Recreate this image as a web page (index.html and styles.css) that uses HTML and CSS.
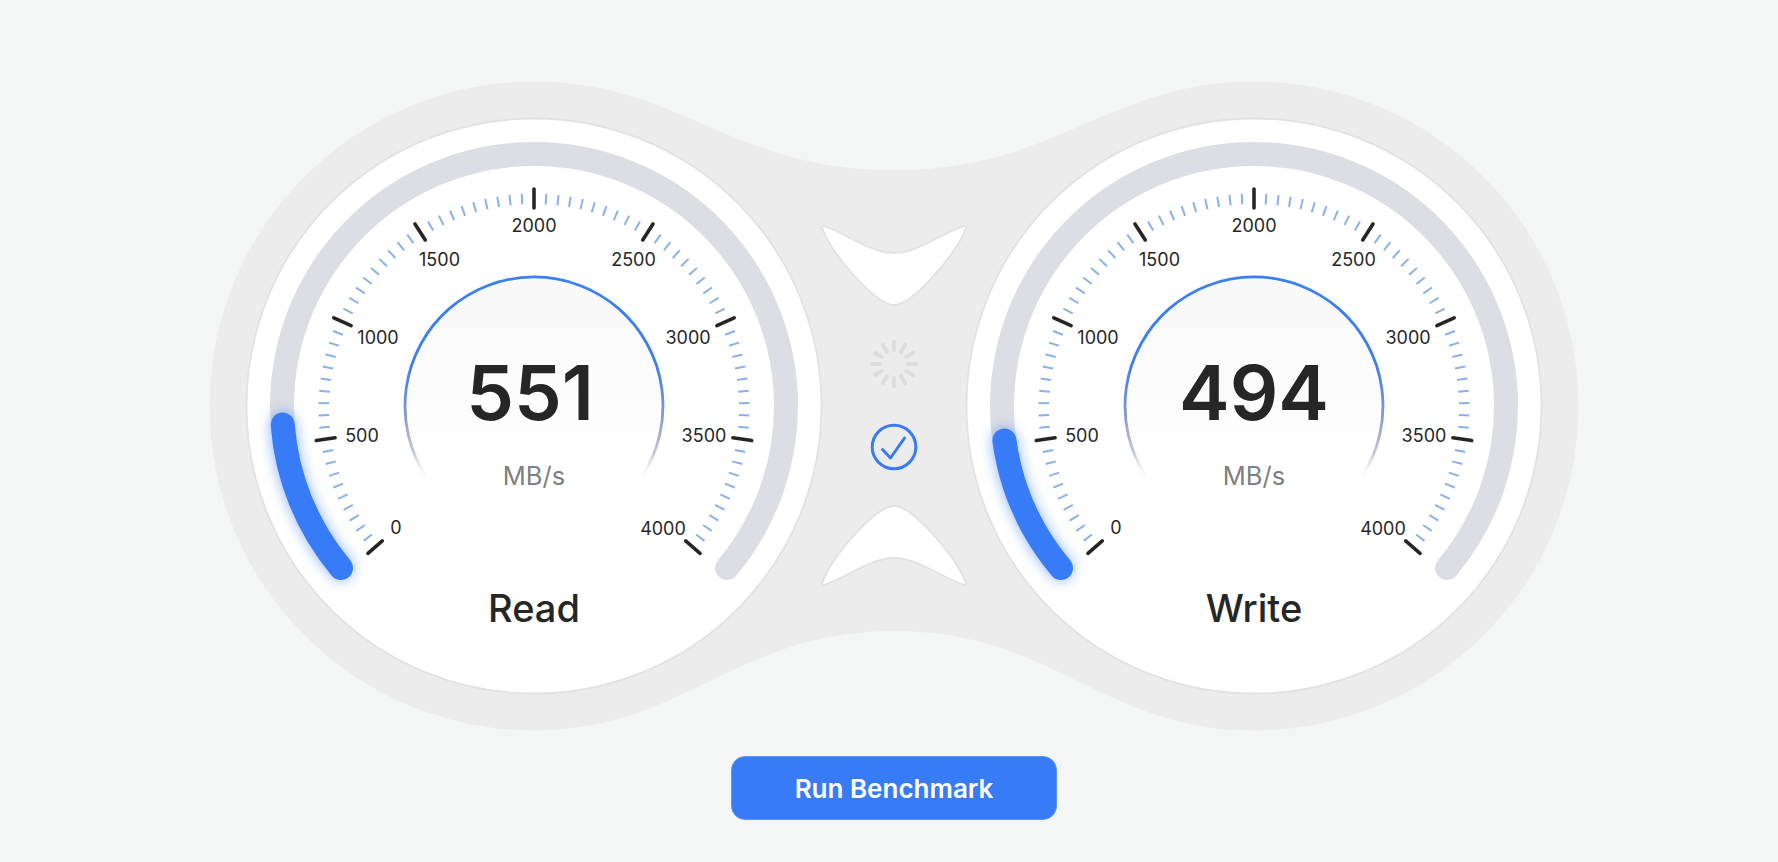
FILE: index.html
```html
<!DOCTYPE html>
<html lang="en">
<head>
<meta charset="utf-8">
<title>Disk Benchmark</title>
<link rel="stylesheet" href="styles.css">
</head>
<body>
<main class="page">
  <svg class="panel" viewBox="0 0 1778 756" width="1778" height="756" xmlns="http://www.w3.org/2000/svg">
    <defs>
      <linearGradient id="ringStroke" gradientUnits="userSpaceOnUse" x1="0" y1="-129" x2="0" y2="71">
        <stop offset="0" stop-color="#3b7ff5"/>
        <stop offset="0.45" stop-color="#3f7fee"/>
        <stop offset="0.68" stop-color="#8099c8"/>
        <stop offset="0.88" stop-color="#c4c8d2"/>
        <stop offset="1" stop-color="#e4e5e8" stop-opacity="0"/>
      </linearGradient>
      <linearGradient id="ringFill" gradientUnits="userSpaceOnUse" x1="0" y1="-129" x2="0" y2="71">
        <stop offset="0" stop-color="#f8f8f8"/>
        <stop offset="1" stop-color="#ffffff"/>
      </linearGradient>
    </defs>

    <path class="blob" d="M534 81.5 C680 81.5 730 170 894 170 C1058 170 1108 81.5 1254 81.5 A324.5 324.5 0 0 1 1254 730.5 C1103 730.5 1053 631 894 631 C735 631 685 730.5 534 730.5 A324.5 324.5 0 0 1 534 81.5 Z"/>

    <path class="notch" d="M825 226.5 C846 233 870 253 894 253 C918 253 942 233 963 226.5 Q966.5 225.5 965.5 229 C955 256 912 305 894 305 C876 305 833 256 822.5 229 Q821.500 225.500 825 226.5 Z"/>
    <path class="notch" transform="matrix(1 0 0 -1 0 811)" d="M825 226.5 C846 233 870 253 894 253 C918 253 942 233 963 226.5 Q966.5 225.5 965.5 229 C955 256 912 305 894 305 C876 305 833 256 822.5 229 Q821.500 225.500 825 226.5 Z"/>

    <g class="spinner" data-spokes="12" transform="translate(894 364)"></g>
    <g transform="translate(894 447)">
      <circle class="check-ring" r="21.800"/>
      <path class="check-mark" d="M-11.500 2.500 L-3.500 11 L10.500 -9"/>
    </g>

    <g transform="translate(534 406)">
      <circle class="face" r="287.500"/>
      <path class="track" d="M-193.040 162 A252 252 0 1 1 193.040 162"/>
      <path class="fill" d="M-193.040 162 A252 252 0 0 1 -251.300 18.500"/>
      <g class="ticks" transform="translate(0 3)"></g>
      <text class="tick-label" x="-138" y="128">0</text>
      <text class="tick-label" x="-172" y="36">500</text>
      <text class="tick-label" x="-156" y="-62">1000</text>
      <text class="tick-label" x="-94.500" y="-140">1500</text>
      <text class="tick-label" x="0" y="-174">2000</text>
      <text class="tick-label" x="99.500" y="-140">2500</text>
      <text class="tick-label" x="154" y="-62">3000</text>
      <text class="tick-label" x="170" y="36">3500</text>
      <text class="tick-label" x="129" y="129">4000</text>
      <path class="ring" d="M-108 70.500 A129 129 0 1 1 108 70.500"/>
      <text class="value" x="-4" y="14">551</text>
      <text class="unit" x="0" y="79">MB/s</text>
      <text class="name" x="0" y="216">Read</text>
    </g>

    <g transform="translate(1254 406)">
      <circle class="face" r="287.500"/>
      <path class="track" d="M-193.040 162 A252 252 0 1 1 193.040 162"/>
      <path class="fill" d="M-193.040 162 A252 252 0 0 1 -249.600 34.600"/>
      <g class="ticks" transform="translate(0 3)"></g>
      <text class="tick-label" x="-138" y="128">0</text>
      <text class="tick-label" x="-172" y="36">500</text>
      <text class="tick-label" x="-156" y="-62">1000</text>
      <text class="tick-label" x="-94.500" y="-140">1500</text>
      <text class="tick-label" x="0" y="-174">2000</text>
      <text class="tick-label" x="99.500" y="-140">2500</text>
      <text class="tick-label" x="154" y="-62">3000</text>
      <text class="tick-label" x="170" y="36">3500</text>
      <text class="tick-label" x="129" y="129">4000</text>
      <path class="ring" d="M-108 70.500 A129 129 0 1 1 108 70.500"/>
      <text class="value" x="0" y="14">494</text>
      <text class="unit" x="0" y="79">MB/s</text>
      <text class="name" x="0" y="216">Write</text>
    </g>
  </svg>
  <div class="actions">
    <button class="run-button" type="button">Run Benchmark</button>
  </div>
</main>
<script src="gauge.js"></script>
</body>
</html>
```
FILE: styles.css
```css
* { box-sizing: border-box; }
html, body { margin: 0; height: 100%; overflow: hidden; }
body {
  background: #f4f6f5;
  font-family: Inter, "Liberation Sans", sans-serif;
}
.page { display: flex; flex-direction: column; width: 1778px; }
.panel { display: block; }
.blob { fill: #ececec; }
.notch { fill: #fff; stroke: #e2e2e2; stroke-width: 1.8; }
.face { fill: #fff; stroke: #e2e2e2; stroke-width: 1.8; }
.track, .fill { fill: none; stroke-width: 24; stroke-linecap: round; }
.track { stroke: #dddee4; }
.fill { stroke: #387bf7; filter: drop-shadow(0 0 7px rgba(56, 123, 247, 0.6)); }
.ring { fill: url(#ringFill); stroke: url(#ringStroke); stroke-width: 2.8; }
.tick-minor { stroke: #8ab0f0; stroke-width: 2; }
.tick-major { stroke: #262626; stroke-width: 3.6; stroke-linecap: round; }
.spoke { stroke: #dcdcdc; stroke-width: 4; stroke-linecap: round; }
.check-ring { fill: none; stroke: #387bf7; stroke-width: 3; }
.check-mark { fill: none; stroke: #387bf7; stroke-width: 3; stroke-linecap: round; stroke-linejoin: round; }
text { font-family: Inter, "Liberation Sans", sans-serif; text-anchor: middle; }
.tick-label { font-size: 18px; fill: #262626; }
.value { font-size: 76px; font-weight: 600; fill: #262626; }
.unit { font-size: 25.5px; fill: #808080; }
.name { font-size: 38px; font-weight: 500; fill: #262626; }
.actions { display: flex; justify-content: center; padding-left: 10px; }
.run-button {
  width: 326px;
  height: 64px;
  border: 1px solid #5f92f2;
  border-radius: 14px;
  background: #387bf7;
  color: #fff;
  font: 600 26px Inter, "Liberation Sans", sans-serif;
}
```
FILE: gauge.js
```js
var SVG_NS = "http://www.w3.org/2000/svg";

function addLine(parent, cls, angleDeg, r1, r2) {
  var a = angleDeg * Math.PI / 180;
  var line = document.createElementNS(SVG_NS, "line");
  line.setAttribute("class", cls);
  line.setAttribute("x1", (Math.sin(a) * r1).toFixed(2));
  line.setAttribute("y1", (-Math.cos(a) * r1).toFixed(2));
  line.setAttribute("x2", (Math.sin(a) * r2).toFixed(2));
  line.setAttribute("y2", (-Math.cos(a) * r2).toFixed(2));
  parent.appendChild(line);
}

document.querySelectorAll(".ticks").forEach(function (group) {
  for (var i = 0; i <= 80; i++) {
    var angle = -131 + i * 262 / 80;
    if (i % 10 === 0) addLine(group, "tick-major", angle, 201, 220);
    else addLine(group, "tick-minor", angle, 205, 215.5);
  }
});

document.querySelectorAll(".spinner").forEach(function (group) {
  var n = Number(group.dataset.spokes);
  for (var i = 0; i < n; i++) addLine(group, "spoke", i * 360 / n, 14, 22);
});
```
